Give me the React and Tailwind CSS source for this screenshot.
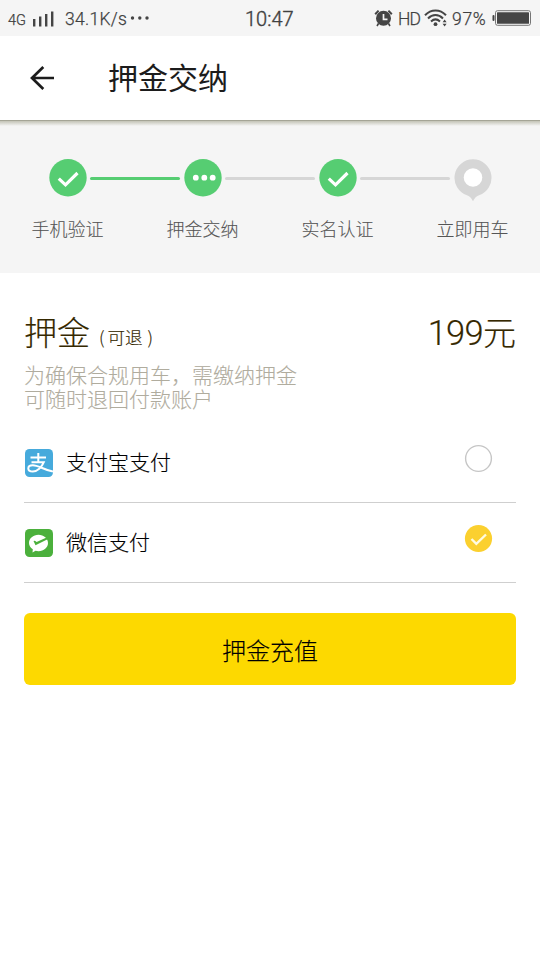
const CJK = "font-['Noto_Sans_CJK_SC',sans-serif]";

function StatusBar() {
  return (
    <div className="flex h-9 items-center bg-[#f5f5f5] font-['Roboto',sans-serif] font-light text-[#404040] [-webkit-text-stroke:0.25px]">
      <span className="ml-2 mt-[5px] w-[20px] text-[14.5px] leading-4">4G</span>
      <svg className="ml-1 mt-px" width="23" height="16" viewBox="0 0 23 16" fill="#454545">
        <rect x="1" y="8" width="2.4" height="7.5" />
        <rect x="7" y="5.5" width="2.4" height="10" />
        <rect x="13" y="3" width="2.4" height="12.5" />
        <rect x="19" y="0.5" width="2.4" height="15" />
      </svg>
      <span className="ml-[10px] mt-0.5 w-[65px] whitespace-nowrap text-[17.5px] leading-5 tracking-[0.3px]">34.1K/s</span>
      <svg width="20" height="6" viewBox="0 0 20 6" fill="#454545">
        <circle cx="2.5" cy="3" r="1.7" />
        <circle cx="9.8" cy="3" r="1.7" />
        <circle cx="17" cy="3" r="1.7" />
      </svg>
      <span className="ml-[95px] mt-0.5 w-[50px] whitespace-nowrap text-[20px] leading-6 [-webkit-text-stroke:0.4px]">10:47</span>
      <svg className="ml-[79px]" width="19" height="18" viewBox="0 0 19 18">
        <circle cx="9.5" cy="9.3" r="7.5" fill="#454545" />
        <path d="M1.2 5.2 4.6 1.6M17.8 5.2 14.4 1.6" stroke="#454545" strokeWidth="2" />
        <path d="M4.5 14.5 3 17M14.5 14.5 16 17" stroke="#454545" strokeWidth="1.6" />
        <path d="M9.5 5v5.3h4" stroke="#f5f5f5" strokeWidth="1.7" fill="none" />
      </svg>
      <span className="ml-[5px] mt-0.5 w-[24px] text-[17.5px] leading-5 tracking-[-0.8px]">HD</span>
      <svg className="ml-[2px]" width="24" height="18" viewBox="0 0 24 18" fill="none" stroke="#454545" strokeWidth="2">
        <path d="M1 6.2C7-.2 16-.2 22 6.2" />
        <path d="M4 9.5c4.500-4.600 10.500-4.600 15 0" />
        <path d="M7 12.500c2.800-2.600 6.200-2.600 9 0" />
        <circle cx="11.5" cy="15.2" r="1.9" fill="#454545" stroke="none" />
        <path d="M18.6 13.2 20.6 10.4 22.6 13.2zM18.6 14.7 20.6 17.5 22.6 14.7z" fill="#454545" stroke="none" />
      </svg>
      <span className="ml-[4px] mt-0.5 w-[37px] whitespace-nowrap text-[17.5px] leading-5 tracking-[0.7px]">97%</span>
      <svg className="ml-[3px]" width="40" height="16" viewBox="0 0 40 16">
        <rect x="0.5" y="5" width="2" height="6" rx="1" fill="#454545" />
        <rect x="3.500" y="0.700" width="35" height="14.600" rx="2" fill="#f5f5f5" stroke="#757575" />
        <rect x="5" y="2.200" width="32" height="11.600" rx="0.500" fill="#454545" />
      </svg>
    </div>
  );
}

function Header() {
  return (
    <header className="flex h-[85px] items-center border-b border-[#a5a596] bg-white">
      <svg className="ml-[29px]" width="26" height="26" viewBox="0 0 26 26" fill="none" stroke="#1c1c1c" strokeWidth="2.7">
        <path d="M25 13H3M14.300 2 3 13l11.300 11" />
      </svg>
      <h1 className="-mt-1 ml-[53px] text-[30px] leading-10 text-[#1c1c1c]">押金交纳</h1>
    </header>
  );
}

function StepIcon({ kind }) {
  if (kind === "pin") {
    return (
      <svg className="shrink-0" width="38" height="44" viewBox="0 0 38 44">
        <path d="M19 .3a18.500 18.500 0 0 1 6 36c-3 1.200-4.500 3-6 6-1.500-3-3-4.800-6-6a18.500 18.500 0 0 1 6-36z" fill="#d6d6d6" />
        <circle cx="19" cy="18.5" r="9.3" fill="#fff" />
      </svg>
    );
  }
  return (
    <svg className="shrink-0" width="38" height="44" viewBox="0 0 38 44">
      <circle cx="19" cy="18.7" r="18.7" fill="#56cd72" />
      {kind === "check" ? (
        <path d="m9.800 19.600 6.700 6.200 12-11.800" fill="none" stroke="#fff" strokeWidth="3.2" />
      ) : (
        <g fill="#fff">
          <circle cx="11.8" cy="18.700" r="2.900" />
          <circle cx="20.300" cy="18.700" r="2.900" />
          <circle cx="28.700" cy="18.700" r="2.900" />
        </g>
      )}
    </svg>
  );
}

function Steps() {
  return (
    <section className="h-[152px] bg-[#f5f5f5]">
      <div className="h-[5px] bg-gradient-to-b from-[#c3c3b6] to-[#f5f5f5]" />
      <div className="flex pl-[49px] pt-[33px]">
        <StepIcon kind="check" />
        <div className="ml-[3px] mr-1 mt-[18px] h-[3px] w-[90px] rounded-full bg-[#56cd72]" />
        <StepIcon kind="dots" />
        <div className="ml-[3px] mr-1 mt-[18px] h-[3px] w-[90px] rounded-full bg-[#d6d6d6]" />
        <StepIcon kind="check" />
        <div className="ml-[3px] mr-1 mt-[18px] h-[3px] w-[90px] rounded-full bg-[#d6d6d6]" />
        <StepIcon kind="pin" />
      </div>
      <div className="mt-[12px] grid grid-cols-4 text-center text-[18px] font-light leading-[26px] text-[#555] [-webkit-text-stroke:0.1px]">
        <span>手机验证</span>
        <span>押金交纳</span>
        <span>实名认证</span>
        <span>立即用车</span>
      </div>
    </section>
  );
}

function AlipayIcon() {
  return (
    <svg width="28" height="28" viewBox="0 0 28 28">
      <rect width="28" height="28" rx="4.5" fill="#46aadc" />
      <path d="M5.500 8.500h15.500M13.300 4v9M6.500 13.200h12.300c-2 5-6.500 9.300-11 9.300-3 0-4.500-1.300-4.500-3.100 0-1.900 1.900-3.200 4.500-3.200 5.700 0 10.200 4.300 20.200 6.400" fill="none" stroke="#fff" strokeWidth="2" />
    </svg>
  );
}

function WechatPayIcon() {
  return (
    <svg width="28" height="28" viewBox="0 0 28 28">
      <rect width="28" height="28" rx="4.5" fill="#4bb03c" />
      <path d="M13.500 5.800c5.300 0 9.500 3.600 9.500 8.200s-4.200 8.200-9.500 8.200c-1 0-2-.1-3-.4l-3 1.600.3-3.200C5.400 18.700 4 16.600 4 14c0-4.600 4.200-8.200 9.500-8.200z" fill="#fff" />
      <path d="m8.500 12 2 4.300L22.600 10.200l-1-1.800-10 4.600-1.700-1.300z" fill="#4bb03c" />
    </svg>
  );
}

function PayRow({ icon, label, checked }) {
  return (
    <div className="flex h-full items-start border-b border-[#cfcfcf] pl-px pr-[23px]">
      <div className="mt-[26px]">{icon}</div>
      <span className="ml-[13px] mt-[23px] text-[21px] font-light leading-[30px] text-black [-webkit-text-stroke:0.15px]">{label}</span>
      <svg className="ml-auto mt-[21px]" width="29" height="29" viewBox="0 0 29 29" fill="none">
        {checked ? (
          <>
            <circle cx="14.5" cy="14.5" r="13.6" fill="#fbd02f" />
            <path d="m7.500 15 4.800 4.800 9.700-9.300" stroke="#fffbe0" strokeWidth="2.4" />
          </>
        ) : (
          <circle cx="14.5" cy="14.5" r="12.9" stroke="#c6c6c6" strokeWidth="1.4" />
        )}
      </svg>
    </div>
  );
}

export default function App() {
  return (
    <div className={`h-[960px] w-[540px] overflow-hidden bg-white ${CJK}`}>
      <StatusBar />
      <Header />
      <Steps />
      <main className="px-6">
        <div className="flex h-[82px] items-baseline pt-[34px] font-light leading-[48px] text-[#352800] [-webkit-text-stroke:0.15px]">
          <span className="text-[33px]">押金</span>
          <span className="relative -top-px ml-[9px] text-[17.5px]">(</span>
          <span className="relative -top-px ml-[3px] text-[17.5px]">可退</span>
          <span className="relative -top-px ml-[5px] text-[17.5px]">)</span>
          <span className="ml-auto flex items-baseline text-[33px]">
            <span className="font-['Roboto',sans-serif] text-[34.5px] tracking-[-0.7px]">199</span>
            <span>元</span>
          </span>
        </div>
        <p className="mt-[7px] text-[21px] font-light leading-6 text-[#b0ac9e] [-webkit-text-stroke:0.1px]">
          为确保合规用车，需缴纳押金
          <br />
          可随时退回付款账户
        </p>
        <div className="mt-[13px] h-[80px]">
          <PayRow icon={<AlipayIcon />} label="支付宝支付" />
        </div>
        <div className="h-[80px]">
          <PayRow icon={<WechatPayIcon />} label="微信支付" checked />
        </div>
        <button className="mt-[30px] block h-[72px] w-full rounded-[6px] bg-[#fdd900] pt-px text-[24px] font-light leading-[72px] text-black [-webkit-text-stroke:0.15px]">
          押金充值
        </button>
      </main>
    </div>
  );
}
